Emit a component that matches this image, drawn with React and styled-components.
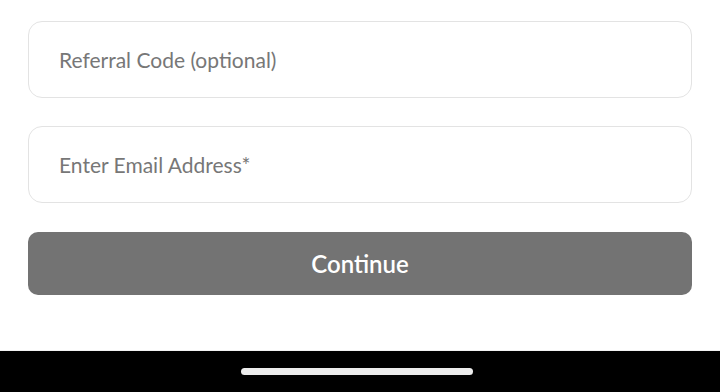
import React from 'react';
import styled, { createGlobalStyle } from 'styled-components';

const GlobalStyle = createGlobalStyle`
  html, body {
    margin: 0;
    padding: 0;
    background: #ffffff;
  }
  body {
    font-family: Lato, "Open Sans", "Liberation Sans", sans-serif;
  }
  * {
    box-sizing: border-box;
  }
`;

const Screen = styled.div`
  width: 720px;
  height: 392px;
  display: flex;
  flex-direction: column;
  background: #ffffff;
  overflow: hidden;
`;

const Form = styled.form`
  flex: 1;
  display: flex;
  flex-direction: column;
  gap: 28px;
  padding: 21px 28px 0;
`;

const Field = styled.input`
  height: 77px;
  width: 100%;
  padding: 0 30px;
  border: 1px solid #e3e3e3;
  border-radius: 14px;
  background: #ffffff;
  font-family: inherit;
  font-size: 21px;
  color: #333;
  outline: none;

  &::placeholder {
    color: #777777;
    opacity: 1;
  }
`;

const ContinueButton = styled.button`
  height: 63px;
  width: 100%;
  margin-top: 1px;
  border: none;
  border-radius: 10px;
  background: #737373;
  color: #ffffff;
  font-family: inherit;
  font-size: 24px;
  font-weight: 600;
  cursor: pointer;
`;

const NavBar = styled.div`
  height: 42px;
  background: #000000;
  border-top: 1px solid #f2f2f2;
  display: flex;
  justify-content: center;
  align-items: center;
`;

const HomeIndicator = styled.div`
  width: 232px;
  height: 7px;
  margin-right: 6px;
  border-radius: 4px;
  background: #ececec;
`;

export default function App() {
  return (
    <Screen>
      <GlobalStyle />
      <Form onSubmit={e => e.preventDefault()}>
        <Field type="text" placeholder="Referral Code (optional)" />
        <Field type="email" placeholder="Enter Email Address*" />
        <ContinueButton type="submit">Continue</ContinueButton>
      </Form>
      <NavBar>
        <HomeIndicator />
      </NavBar>
    </Screen>
  );
}
